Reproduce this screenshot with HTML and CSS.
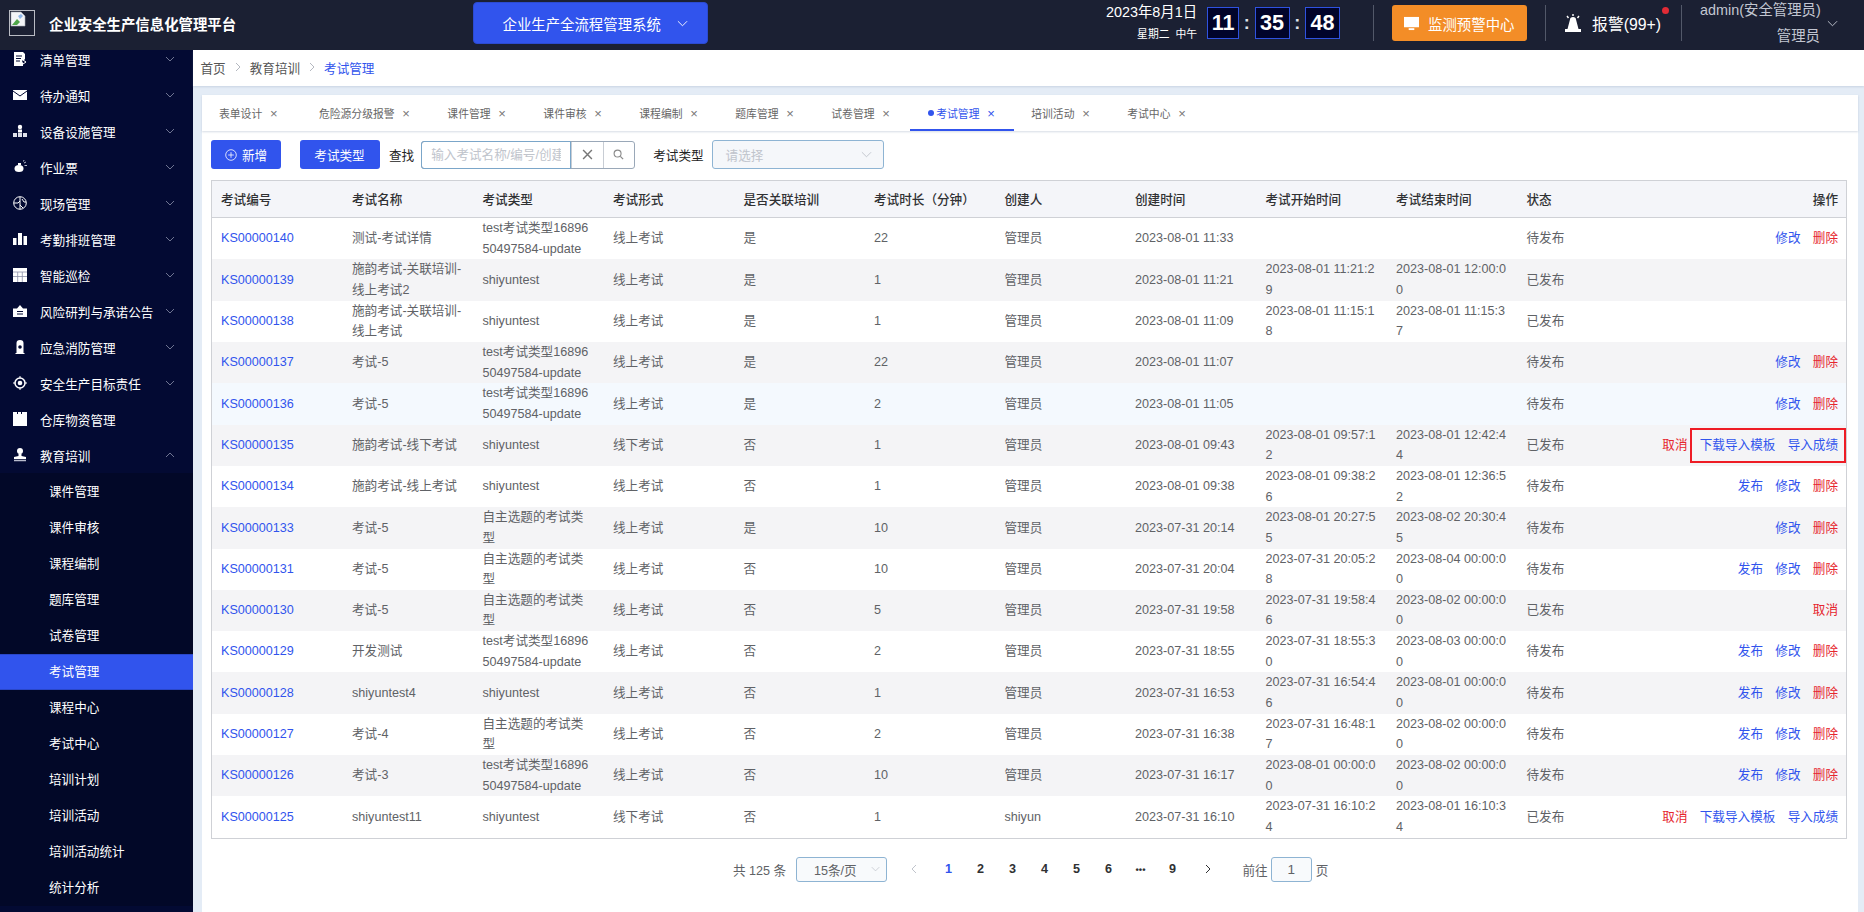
FILE: index.html
```html
<!DOCTYPE html>
<html lang="zh-CN">
<head>
<meta charset="utf-8">
<title>企业安全生产信息化管理平台</title>
<link rel="stylesheet" href="styles.css">
</head>
<body>
<header class="topbar">
  <svg class="logo" viewBox="0 0 26 26"><rect x=".5" y=".5" width="25" height="25" fill="none" stroke="#b9bcc4"/><path d="M2 2h10l4 4v10H2z" fill="#f3f5f8" stroke="#a9adb5" stroke-width=".6"/><path d="M3 15l5-6 3 3-3 3z" fill="#4fa64a"/><path d="M9 6l3-2 2 2-3 3z" fill="#8fb6e8"/></svg>
  <div class="brand">企业安全生产信息化管理平台</div>
  <button class="system-btn"><span>企业生产全流程管理系统</span><svg class="chev" viewBox="0 0 12 7"><path d="M1 1l5 5 5-5" fill="none" stroke="#fff" stroke-width="1"/></svg></button>
  <div class="top-right">
    <div class="date"><div class="date-main">2023年8月1日</div><div class="date-sub"><span>星期二</span><span>中午</span></div></div>
    <div class="clock">
      <span class="digit narrow">11</span><span class="colon">:</span><span class="digit">35</span><span class="colon">:</span><span class="digit">48</span>
    </div>
    <i class="divider first"></i>
    <button class="monitor-btn"><svg viewBox="0 0 18 16"><path d="M1 1h16v11H1z" fill="#fff"/><path d="M6 13h6v2H6z" fill="#fff"/></svg><span>监测预警中心</span></button>
    <i class="divider"></i>
    <svg class="alarm-icon" viewBox="0 0 18 18"><path d="M9 0v2M3 2l1.500 2M15 2l-1.500 2" stroke="#fff" stroke-width="1.400" fill="none"/><path d="M6 5.500a3 2.500 0 0 1 6 0L14.500 15h-11z" fill="#fff"/><path d="M1 15h16v3H1z" fill="#fff"/></svg>
    <div class="alarm-text">报警(99+)<b class="dot"></b></div>
    <i class="divider last"></i>
    <div class="user"><div>admin(安全管理员)</div><div>管理员</div></div>
    <svg class="chev user-chev" viewBox="0 0 12 7"><path d="M1 1l5 5 5-5" fill="none" stroke="#c5c9d3" stroke-width="1"/></svg>
  </div>
</header>

<div class="shell">
  <aside class="sidebar">
    <nav class="menu">
      <a class="item"><svg class="ico" viewBox="0 0 14 14"><path d="M1 0h9l2 2v5l-2 2v-1l-1 1 1 2v3H1z" fill="#fff"/><path d="M3 4h6M3 6.500h5M3 9h4" stroke="#030a33" stroke-width="1"/><path d="M10 8l3 2-3 2" stroke="#fff" fill="none"/></svg><span>清单管理</span><svg class="arrow" viewBox="0 0 10 6"><path d="M1 1l4 4 4-4"/></svg></a>
      <a class="item"><svg class="ico" viewBox="0 0 14 14"><path d="M0 2h14v10H0z" fill="#fff"/><path d="M0 3l7 5 7-5" fill="none" stroke="#030a33" stroke-width="1"/></svg><span>待办通知</span><svg class="arrow" viewBox="0 0 10 6"><path d="M1 1l4 4 4-4"/></svg></a>
      <a class="item"><svg class="ico" viewBox="0 0 14 14"><circle cx="7" cy="3" r="2.200" fill="#fff"/><path d="M5 5.500h4v3H5z" fill="#fff"/><path d="M0 9h4v4H0zM5 9h4v4H5zM10 9h4v4h-4z" fill="#dfe1ea"/></svg><span>设备设施管理</span><svg class="arrow" viewBox="0 0 10 6"><path d="M1 1l4 4 4-4"/></svg></a>
      <a class="item"><svg class="ico" viewBox="0 0 14 14"><ellipse cx="6" cy="8.500" rx="4.500" ry="3.500" fill="#fff"/><path d="M5 3h3v2H5z" fill="#fff"/><path d="M11 3l2-1M11.500 5.500h2.500M10.500 1.500l.5-1.500" stroke="#b8bbcb" stroke-width="1"/></svg><span>作业票</span><svg class="arrow" viewBox="0 0 10 6"><path d="M1 1l4 4 4-4"/></svg></a>
      <a class="item"><svg class="ico" viewBox="0 0 14 14"><circle cx="7" cy="7" r="6.300" fill="none" stroke="#fff" stroke-width="1"/><path d="M7 1v12M1 7h4l2-2M9 3l2 3h2M7 9l3 3" fill="none" stroke="#fff" stroke-width="1"/></svg><span>现场管理</span><svg class="arrow" viewBox="0 0 10 6"><path d="M1 1l4 4 4-4"/></svg></a>
      <a class="item"><svg class="ico" viewBox="0 0 14 14"><path d="M0 6h3.500v7H0zM5 1h4v12H5zM10.500 4H14v9h-3.500z" fill="#fff"/></svg><span>考勤排班管理</span><svg class="arrow" viewBox="0 0 10 6"><path d="M1 1l4 4 4-4"/></svg></a>
      <a class="item"><svg class="ico" viewBox="0 0 14 14"><path d="M0 0h14v14H0z" fill="#fff"/><path d="M0 4h14M0 8.500h14M4.700 4v10M9.300 4v10" stroke="#8d90a8" stroke-width=".8"/></svg><span>智能巡检</span><svg class="arrow" viewBox="0 0 10 6"><path d="M1 1l4 4 4-4"/></svg></a>
      <a class="item"><svg class="ico" viewBox="0 0 14 14"><path d="M0 4.500h4L7 1l3 3.500h4V13H0z" fill="#fff"/><path d="M4 7.500h6M4 10h6" stroke="#030a33" stroke-width="1"/></svg><span>风险研判与承诺公告</span><svg class="arrow" viewBox="0 0 10 6"><path d="M1 1l4 4 4-4"/></svg></a>
      <a class="item"><svg class="ico" viewBox="0 0 14 14"><path d="M3.500 13V3a3.500 3 0 0 1 7 0v10zM2.500 13h9v1h-9z" fill="#fff"/><circle cx="7" cy="7" r="1.800" fill="#030a33"/></svg><span>应急消防管理</span><svg class="arrow" viewBox="0 0 10 6"><path d="M1 1l4 4 4-4"/></svg></a>
      <a class="item"><svg class="ico" viewBox="0 0 14 14"><circle cx="7" cy="7" r="5" fill="none" stroke="#fff" stroke-width="1.500"/><circle cx="7" cy="7" r="2.300" fill="#fff"/><path d="M7 0v2.500M7 11.500V14M0 7h2.500M11.500 7H14" stroke="#fff" stroke-width="1"/></svg><span>安全生产目标责任</span><svg class="arrow" viewBox="0 0 10 6"><path d="M1 1l4 4 4-4"/></svg></a>
      <a class="item"><svg class="ico" viewBox="0 0 14 14"><path d="M0 0h4v2h1V0h3v2h1V0h5v14H0z" fill="#fff"/></svg><span>仓库物资管理</span></a>
      <a class="item"><svg class="ico" viewBox="0 0 14 14"><circle cx="7" cy="3" r="3" fill="#fff"/><path d="M5.500 5.500h3v2.500L13 9v2H1V9l4.500-1z" fill="#fff"/><path d="M1 12.500h12" stroke="#b8bbcb" stroke-width="1.500"/></svg><span>教育培训</span><svg class="arrow" viewBox="0 0 10 6"><path d="M1 5l4-4 4 4"/></svg></a>
      <div class="submenu">
        <a class="sub">课件管理</a>
        <a class="sub">课件审核</a>
        <a class="sub">课程编制</a>
        <a class="sub">题库管理</a>
        <a class="sub">试卷管理</a>
        <a class="sub active">考试管理</a>
        <a class="sub">课程中心</a>
        <a class="sub">考试中心</a>
        <a class="sub">培训计划</a>
        <a class="sub">培训活动</a>
        <a class="sub">培训活动统计</a>
        <a class="sub">统计分析</a>
      </div>
    </nav>
  </aside>

  <main class="main">
    <div class="crumbs">
      <span>首页</span><svg class="sep" viewBox="0 0 6 10"><path d="M1 1l4 4-4 4"/></svg><span>教育培训</span><svg class="sep" viewBox="0 0 6 10"><path d="M1 1l4 4-4 4"/></svg><span class="current">考试管理</span>
    </div>
    <div class="workspace">
      <section class="card">
        <div class="tabs">
          <div class="tab wide"><span>表单设计</span><i class="x">×</i></div>
          <div class="tab"><span>危险源分级报警</span><i class="x">×</i></div>
          <div class="tab"><span>课件管理</span><i class="x">×</i></div>
          <div class="tab"><span>课件审核</span><i class="x">×</i></div>
          <div class="tab"><span>课程编制</span><i class="x">×</i></div>
          <div class="tab"><span>题库管理</span><i class="x">×</i></div>
          <div class="tab"><span>试卷管理</span><i class="x">×</i></div>
          <div class="tab on"><b class="tab-dot"></b><span>考试管理</span><i class="x">×</i></div>
          <div class="tab"><span>培训活动</span><i class="x">×</i></div>
          <div class="tab"><span>考试中心</span><i class="x">×</i></div>
        </div>
        <div class="body">
          <div class="toolbar">
            <button class="btn add"><svg viewBox="0 0 12 12"><circle cx="6" cy="6" r="5.300" fill="none" stroke="#fff" stroke-width=".8"/><path d="M6 3.200v5.600M3.200 6h5.600" stroke="#fff" stroke-width=".8"/></svg><span>新增</span></button>
            <button class="btn type">考试类型</button>
            <label class="find">查找</label>
            <div class="search">
              <div class="search-input"><span>输入考试名称/编号/创建人</span></div>
              <div class="search-btn"><svg viewBox="0 0 10 10"><path d="M1 1l8 8M9 1l-8 8" stroke="#777" stroke-width="1.300"/></svg></div>
              <div class="search-btn"><svg viewBox="0 0 12 12"><circle cx="5" cy="5" r="3.800" fill="none" stroke="#8a8a8a" stroke-width="1.200"/><path d="M8 8l3 3" stroke="#8a8a8a" stroke-width="1.400"/></svg></div>
            </div>
            <label class="type-label">考试类型</label>
            <div class="select"><span>请选择</span><svg class="chev" viewBox="0 0 12 7"><path d="M1 1l5 5 5-5" fill="none" stroke="#c0c4cc" stroke-width="1"/></svg></div>
          </div>

          <div class="table-wrap">
            <table class="grid">
              <thead>
                <tr><th>考试编号</th><th>考试名称</th><th>考试类型</th><th>考试形式</th><th>是否关联培训</th><th>考试时长（分钟）</th><th>创建人</th><th>创建时间</th><th>考试开始时间</th><th>考试结束时间</th><th>状态</th><th class="ops">操作</th></tr>
              </thead>
              <tbody>
                <tr><td><a class="link">KS00000140</a></td><td>测试-考试详情</td><td>test考试类型16896<br>50497584-update</td><td>线上考试</td><td>是</td><td>22</td><td>管理员</td><td>2023-08-01 11:33</td><td></td><td></td><td>待发布</td><td class="ops"><a class="link">修改</a><a class="del">删除</a></td></tr>
                <tr><td><a class="link">KS00000139</a></td><td>施韵考试-关联培训-<br>线上考试2</td><td>shiyuntest</td><td>线上考试</td><td>是</td><td>1</td><td>管理员</td><td>2023-08-01 11:21</td><td>2023-08-01 11:21:2<br>9</td><td>2023-08-01 12:00:0<br>0</td><td>已发布</td><td class="ops"></td></tr>
                <tr><td><a class="link">KS00000138</a></td><td>施韵考试-关联培训-<br>线上考试</td><td>shiyuntest</td><td>线上考试</td><td>是</td><td>1</td><td>管理员</td><td>2023-08-01 11:09</td><td>2023-08-01 11:15:1<br>8</td><td>2023-08-01 11:15:3<br>7</td><td>已发布</td><td class="ops"></td></tr>
                <tr><td><a class="link">KS00000137</a></td><td>考试-5</td><td>test考试类型16896<br>50497584-update</td><td>线上考试</td><td>是</td><td>22</td><td>管理员</td><td>2023-08-01 11:07</td><td></td><td></td><td>待发布</td><td class="ops"><a class="link">修改</a><a class="del">删除</a></td></tr>
                <tr class="hover"><td><a class="link">KS00000136</a></td><td>考试-5</td><td>test考试类型16896<br>50497584-update</td><td>线上考试</td><td>是</td><td>2</td><td>管理员</td><td>2023-08-01 11:05</td><td></td><td></td><td>待发布</td><td class="ops"><a class="link">修改</a><a class="del">删除</a></td></tr>
                <tr><td><a class="link">KS00000135</a></td><td>施韵考试-线下考试</td><td>shiyuntest</td><td>线下考试</td><td>否</td><td>1</td><td>管理员</td><td>2023-08-01 09:43</td><td>2023-08-01 09:57:1<br>2</td><td>2023-08-01 12:42:4<br>4</td><td>已发布</td><td class="ops"><a class="del">取消</a><span class="marked"><a class="link">下载导入模板</a><a class="link">导入成绩</a></span></td></tr>
                <tr><td><a class="link">KS00000134</a></td><td>施韵考试-线上考试</td><td>shiyuntest</td><td>线上考试</td><td>否</td><td>1</td><td>管理员</td><td>2023-08-01 09:38</td><td>2023-08-01 09:38:2<br>6</td><td>2023-08-01 12:36:5<br>2</td><td>待发布</td><td class="ops"><a class="link">发布</a><a class="link">修改</a><a class="del">删除</a></td></tr>
                <tr><td><a class="link">KS00000133</a></td><td>考试-5</td><td>自主选题的考试类<br>型</td><td>线上考试</td><td>是</td><td>10</td><td>管理员</td><td>2023-07-31 20:14</td><td>2023-08-01 20:27:5<br>5</td><td>2023-08-02 20:30:4<br>5</td><td>待发布</td><td class="ops"><a class="link">修改</a><a class="del">删除</a></td></tr>
                <tr><td><a class="link">KS00000131</a></td><td>考试-5</td><td>自主选题的考试类<br>型</td><td>线上考试</td><td>否</td><td>10</td><td>管理员</td><td>2023-07-31 20:04</td><td>2023-07-31 20:05:2<br>8</td><td>2023-08-04 00:00:0<br>0</td><td>待发布</td><td class="ops"><a class="link">发布</a><a class="link">修改</a><a class="del">删除</a></td></tr>
                <tr><td><a class="link">KS00000130</a></td><td>考试-5</td><td>自主选题的考试类<br>型</td><td>线上考试</td><td>否</td><td>5</td><td>管理员</td><td>2023-07-31 19:58</td><td>2023-07-31 19:58:4<br>6</td><td>2023-08-02 00:00:0<br>0</td><td>已发布</td><td class="ops"><a class="del">取消</a></td></tr>
                <tr><td><a class="link">KS00000129</a></td><td>开发测试</td><td>test考试类型16896<br>50497584-update</td><td>线上考试</td><td>否</td><td>2</td><td>管理员</td><td>2023-07-31 18:55</td><td>2023-07-31 18:55:3<br>0</td><td>2023-08-03 00:00:0<br>0</td><td>待发布</td><td class="ops"><a class="link">发布</a><a class="link">修改</a><a class="del">删除</a></td></tr>
                <tr><td><a class="link">KS00000128</a></td><td>shiyuntest4</td><td>shiyuntest</td><td>线上考试</td><td>否</td><td>1</td><td>管理员</td><td>2023-07-31 16:53</td><td>2023-07-31 16:54:4<br>6</td><td>2023-08-01 00:00:0<br>0</td><td>待发布</td><td class="ops"><a class="link">发布</a><a class="link">修改</a><a class="del">删除</a></td></tr>
                <tr><td><a class="link">KS00000127</a></td><td>考试-4</td><td>自主选题的考试类<br>型</td><td>线上考试</td><td>否</td><td>2</td><td>管理员</td><td>2023-07-31 16:38</td><td>2023-07-31 16:48:1<br>7</td><td>2023-08-02 00:00:0<br>0</td><td>待发布</td><td class="ops"><a class="link">发布</a><a class="link">修改</a><a class="del">删除</a></td></tr>
                <tr><td><a class="link">KS00000126</a></td><td>考试-3</td><td>test考试类型16896<br>50497584-update</td><td>线上考试</td><td>否</td><td>10</td><td>管理员</td><td>2023-07-31 16:17</td><td>2023-08-01 00:00:0<br>0</td><td>2023-08-02 00:00:0<br>0</td><td>待发布</td><td class="ops"><a class="link">发布</a><a class="link">修改</a><a class="del">删除</a></td></tr>
                <tr><td><a class="link">KS00000125</a></td><td>shiyuntest11</td><td>shiyuntest</td><td>线下考试</td><td>否</td><td>1</td><td>shiyun</td><td>2023-07-31 16:10</td><td>2023-07-31 16:10:2<br>4</td><td>2023-08-01 16:10:3<br>4</td><td>已发布</td><td class="ops"><a class="del">取消</a><a class="link">下载导入模板</a><a class="link">导入成绩</a></td></tr>
              </tbody>
            </table>
          </div>

          <div class="pager">
            <span class="total">共 125 条</span>
            <div class="size"><span>15条/页</span><svg class="chev" viewBox="0 0 12 7"><path d="M1 1l5 5 5-5" fill="none" stroke="#c0c4cc" stroke-width="1"/></svg></div>
            <svg class="nav prev" viewBox="0 0 6 10"><path d="M5 1L1 5l4 4"/></svg>
            <span class="num cur">1</span><span class="num">2</span><span class="num">3</span><span class="num">4</span><span class="num">5</span><span class="num">6</span><span class="num more">•••</span><span class="num">9</span>
            <svg class="nav next" viewBox="0 0 6 10"><path d="M1 1l4 4-4 4"/></svg>
            <span class="goto">前往</span><div class="page-input">1</div><span class="goto-end">页</span>
          </div>
        </div>
      </section>
    </div>
  </main>
</div>
</body>
</html>
```
FILE: styles.css
```css
* { box-sizing: border-box; }
html, body { margin: 0; height: 100%; overflow: hidden; }
body {
  font-family: "Liberation Sans", "Noto Sans CJK SC", sans-serif;
  font-size: 12.6px;
  color: #606266;
  background: #e4ecf6;
}
a { text-decoration: none; }
i { font-style: normal; }
button { font-family: inherit; border: 0; padding: 0; cursor: pointer; }

/* top bar */
.topbar {
  height: 50px;
  display: flex;
  align-items: center;
  background: #1b2033;
  color: #fff;
  padding-left: 9px;
  position: relative;
  z-index: 2;
}
.logo { width: 26px; height: 26px; margin-top: -4px; flex: none; }
.brand { margin-left: 14px; margin-top: -4px; width: 188px; font-size: 14.4px; font-weight: 700; white-space: nowrap; }
.system-btn {
  margin-left: 235.500px;
  width: 235px;
  height: 42px;
  margin-top: -4px;
  display: flex;
  align-items: center;
  padding-left: 29px;
  background: #3154ed;
  border: 1px solid #2c4bd0;
  border-radius: 4px;
  color: #fff;
  font-size: 14.4px;
}
.chev { width: 11px; height: 7px; flex: none; }
.system-btn .chev { margin-left: 16px; }
.top-right { margin-left: auto; display: flex; align-items: center; padding-right: 26px; height: 50px; }
.date { text-align: right; margin-right: 10px; margin-top: -4px; white-space: nowrap; }
.date-main { font-size: 14.4px; line-height: 20px; }
.date-sub { font-size: 10.8px; line-height: 20px; margin-top: 2px; display: flex; justify-content: flex-end; gap: 6px; }
.clock { display: flex; align-items: center; margin-top: -4px; }
.digit {
  width: 35px;
  height: 32px;
  background: #01042a;
  border: 1px solid #2f52e0;
  font-weight: 700;
  font-size: 21.6px;
  line-height: 30px;
  text-align: center;
}
.digit.narrow { width: 32px; }
.colon { width: 15.500px; text-align: center; font-weight: 700; font-size: 18px; color: #dfe2ea; }
.divider { width: 1px; height: 36px; background: #525869; margin: -4px 18px 0; }
.divider.first { margin-left: 33px; }
.divider.last { margin-left: 20px; }
.monitor-btn {
  width: 135px;
  height: 36px;
  margin-top: -4px;
  display: flex;
  align-items: center;
  padding-left: 11px;
  gap: 8px;
  background: #f38d27;
  border-radius: 3px;
  color: #fff;
  font-size: 14.4px;
}
.monitor-btn svg { width: 17px; height: 15px; }
.alarm-icon { width: 18px; height: 18px; margin-top: -4px; }
.alarm-text { position: relative; margin-left: 10px; margin-top: -4px; font-size: 15.800px; white-space: nowrap; color: #fff; }
.dot { position: absolute; right: -8px; top: -5px; width: 7px; height: 7px; border-radius: 50%; background: #e12b36; }
.user {
  width: 120px;
  margin-top: -4px;
  text-align: right;
  font-size: 14.4px;
  line-height: 26px;
  color: #c2c6d1;
  white-space: nowrap;
}
.user-chev { margin-left: 7px; margin-top: -4px; }

/* shell */
.shell { display: flex; height: 862px; }
.sidebar { width: 193px; flex: none; background: #030a33; overflow: hidden; }
.menu { margin-top: -9px; }
.item {
  height: 36px;
  display: flex;
  align-items: center;
  padding: 0 18px 0 13px;
  color: #fff;
  font-size: 12.6px;
  white-space: nowrap;
}
.ico { width: 14px; height: 14px; flex: none; margin-right: 13px; }
.arrow { width: 10px; height: 6px; margin-left: auto; flex: none; }
.arrow path { fill: none; stroke: #6f7592; stroke-width: 1; }
.submenu { background: #020828; padding-top: 1px; }
.sub { display: block; height: 36px; line-height: 36px; padding-left: 49px; color: #fff; font-size: 12.6px; white-space: nowrap; }
.sub.active { background: #3154ed; border-top: 1px solid #2a47c8; border-bottom: 1px solid #2a47c8; line-height: 34px; }

/* main */
.main { flex: 1; min-width: 0; display: flex; flex-direction: column; }
.crumbs {
  height: 36px;
  flex: none;
  background: #fff;
  display: flex;
  align-items: center;
  padding: 0 0 2px 7.500px;
  color: #555;
  box-shadow: 0 1px 2px rgba(120,140,170,.25);
}
.sep { width: 6px; height: 10px; margin: 0 9px; }
.sep path { fill: none; stroke: #b4b8c0; stroke-width: 1; }
.crumbs .current { color: #3154ed; }
.workspace { flex: 1; min-height: 0; padding: 9px 6px 0 9px; }
.card { height: 100%; background: #fff; display: flex; flex-direction: column; }
.tabs {
  height: 36px;
  flex: none;
  display: flex;
  font-size: 10.8px;
  color: #666;
  white-space: nowrap;
  box-shadow: 0 1px 2px rgba(120,140,170,.3);
}
.tab { display: flex; align-items: center; padding: 0 17px; height: 36px; }
.tab.wide { margin-right: 4px; }
.tab .x { margin-left: 7px; font-size: 13px; color: #777; line-height: 1; width: 9px; text-align: center; margin-right: 2.800px; }
.tab.on { color: #3154ed; border-bottom: 2px solid #3154ed; padding: 2px 16px 0 17px; }
.tab.on .x { color: #3154ed; }
.tab-dot { width: 6px; height: 6px; border-radius: 50%; background: #3154ed; margin-left: 1px; margin-right: 2px; }

.body { flex: 1; min-height: 0; padding: 9px 11px 0 9px; }
.toolbar { display: flex; align-items: center; height: 29px; }
.btn { height: 29px; background: #3154ed; color: #fff; border-radius: 3px; font-size: 12.6px; white-space: nowrap; }
.btn.add { width: 70px; display: flex; align-items: center; justify-content: center; gap: 5px; }
.btn.add svg { width: 12px; height: 12px; }
.btn.type { width: 80px; margin-left: 18.500px; }
.find { margin-left: 9.500px; width: 25.200px; color: #222; white-space: nowrap; }
.search { margin-left: 7px; width: 214px; height: 28px; display: flex; border: 1px solid #9aa8b8; border-radius: 3px; }
.search-input {
  width: 150px;
  flex: none;
  border: 1px solid #7ba6c9;
  margin: -1px 0;
  margin-left: -1px;
  border-radius: 3px 0 0 3px;
  padding: 0 9px;
  line-height: 26px;
  font-size: 12.6px;
  color: #c0c4cc;
  white-space: nowrap;
}
.search-input span { display: block; overflow: hidden; }
.search-btn { flex: 1; display: flex; align-items: center; justify-content: center; border-left: 1px solid #c8cdd4; }
.search-btn svg { width: 11px; height: 11px; }
.type-label { margin-left: 18px; color: #222; white-space: nowrap; }
.select {
  margin-left: 8px;
  width: 172px;
  height: 29px;
  display: flex;
  align-items: center;
  justify-content: space-between;
  padding: 0 11px 0 13px;
  background: #f5f7fa;
  border: 1px solid #8eb4d3;
  border-radius: 3px;
  color: #c0c4cc;
}

.table-wrap { margin-top: 11px; border: 1px solid #cfd1d6; }
.grid { width: 100%; border-collapse: collapse; table-layout: fixed; font-size: 12.6px; }
.grid th {
  height: 36.500px;
  padding: 0 0 2px 10px;
  width: 130.500px;
  text-align: left;
  font-weight: 500;
  color: #303133;
  background: #f4f5f9;
  border-bottom: 1px solid #cfd1d6;
  white-space: nowrap;
}
.grid th:first-child { width: 130px; padding-left: 9px; }
.grid th.ops { width: auto; text-align: right; padding-right: 8px; padding-left: 0; }
.grid td { height: 41.300px; padding: 0 0 0 10px; line-height: 20.650px; vertical-align: middle; white-space: nowrap; overflow: hidden; }
.grid td:first-child { padding-left: 9px; }
.grid tbody tr:nth-child(even) td { background: #f4f4f6; }
.grid tbody tr.hover td { background: #f4f9fe; }
.grid td.ops { text-align: right; padding: 0 8px 0 0; overflow: visible; }
.link { color: #3154ed; }
.del { color: #e6262e; }
.ops a { margin-left: 12.300px; }
.marked { position: relative; display: inline-block; }
.marked::after {
  content: "";
  position: absolute;
  left: 3px;
  right: -8px;
  top: -7px;
  bottom: -7px;
  border: 2px solid #ee1c25;
}

.pager { display: flex; align-items: center; height: 25px; margin-top: 18px; padding-left: 522px; white-space: nowrap; color: #606266; }
.total { width: 63px; }
.size {
  width: 91px;
  height: 25px;
  display: flex;
  align-items: center;
  justify-content: space-between;
  padding: 0 6px 0 17px;
  background: #f8fafc;
  border: 1px solid #8eb4d3;
  border-radius: 3px;
}
.size .chev { width: 9px; height: 6px; }
.nav { width: 6px; height: 10px; flex: none; }
.nav path { fill: none; stroke-width: 1; }
.nav.prev { margin-left: 24px; }
.nav.prev path { stroke: #c0c4cc; }
.nav.next { margin-left: 16px; }
.nav.next path { stroke: #303133; }
.num { width: 32px; text-align: center; color: #303133; font-weight: 700; }
.num.cur { color: #3154ed; margin-left: 15.500px; }
.num.more { font-size: 9.500px; }
.goto { margin-left: 32px; width: 25.200px; }
.page-input {
  margin-left: 3px;
  width: 41px;
  height: 25px;
  line-height: 23px;
  text-align: center;
  background: #f8fafc;
  border: 1px solid #8eb4d3;
  border-radius: 3px;
  font-size: 13.500px;
}
.goto-end { margin-left: 4px; }
```
